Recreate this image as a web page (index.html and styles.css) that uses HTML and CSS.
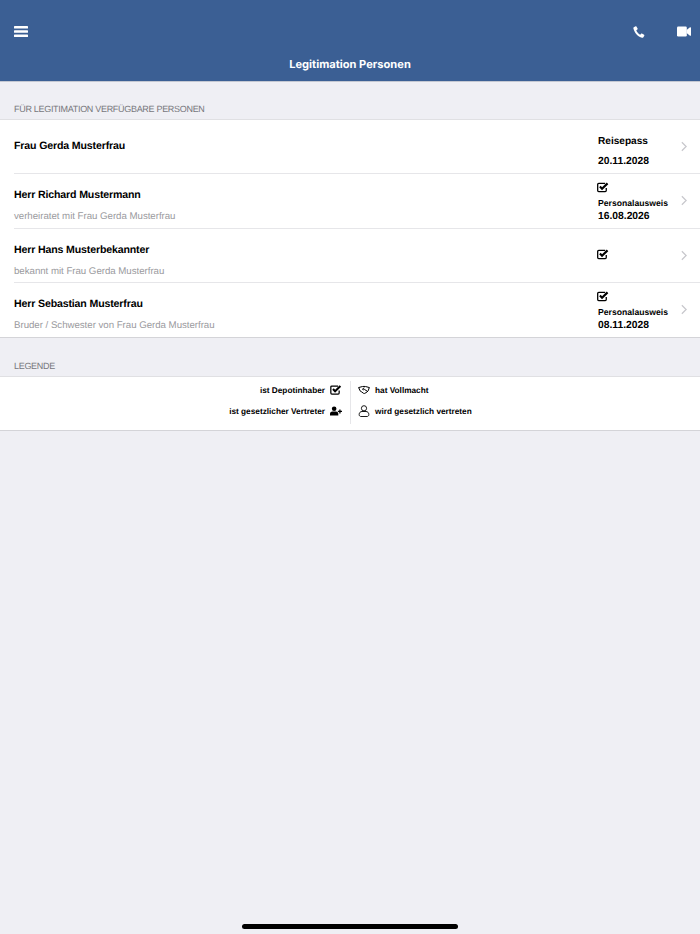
FILE: index.html
```html
<!DOCTYPE html>
<html lang="de">
<head>
    <meta charset="UTF-8">
    <meta name="viewport" content="width=device-width, initial-scale=1.0">
    <title>Legitimation Personen</title>
    <link rel="stylesheet" href="styles.css">
</head>
<body>
    <svg class="icon-defs" width="0" height="0">
        <symbol id="check" viewBox="0 0 14 12">
            <path d="M10.800 6.600v3a1.200 1.200 0 0 1-1.200 1.200H2a1.200 1.200 0 0 1-1.200-1.200V2.400A1.200 1.200 0 0 1 2 1.200h7.500" fill="none" stroke="currentColor" stroke-width="1.500"/>
            <path d="M3.400 4.800l2.500 2.600 6.400-6.200" fill="none" stroke="currentColor" stroke-width="2.500"/>
        </symbol>
        <symbol id="chevron" viewBox="0 0 7 12">
            <path d="M1 1l5 5-5 5" fill="none" stroke="currentColor" stroke-width="1.400"/>
        </symbol>
    </svg>

    <header class="topbar">
        <div class="topbar-icons">
            <svg class="menu-icon" viewBox="0 0 14 11">
                <rect width="14" height="2.600" rx="0.600" fill="#fff"/>
                <rect y="4.200" width="14" height="2.600" rx="0.600" fill="#fff"/>
                <rect y="8.400" width="14" height="2.600" rx="0.600" fill="#fff"/>
            </svg>
            <div class="topbar-right">
                <svg class="phone-icon" viewBox="0 0 12 12">
                    <path d="M2.600.3L.8 1.300C.4 1.600.3 2 .4 2.500c.6 2.200 1.600 4.200 3 5.800 1.500 1.700 3.600 3 5.600 3.500.5.100.9 0 1.200-.4l1.100-1.700c.2-.3.1-.7-.2-.9L8.900 7.600c-.3-.2-.6-.1-.8.100l-.9 1c-1.800-.9-3.200-2.600-3.900-4.500l1.100-.8c.3-.2.3-.5.200-.8L3.400.6C3.200.2 2.900.1 2.600.3z" fill="#fff"/>
                </svg>
                <svg class="video-icon" viewBox="0 0 14 11">
                    <rect y="0.500" width="9.800" height="10" rx="1.200" fill="#fff"/>
                    <path d="M9.600 4L13 1.300c.4-.3 1-.1 1 .4v7.600c0 .5-.6.700-1 .4L9.600 7z" fill="#fff"/>
                </svg>
            </div>
        </div>
        <h1 class="topbar-title">Legitimation Personen</h1>
    </header>

    <div class="section-label">FÜR LEGITIMATION VERFÜGBARE PERSONEN</div>
    <section class="list">
        <div class="person">
            <div class="person-main person-main-single">
                <div class="person-name">Frau Gerda Musterfrau</div>
            </div>
            <div class="person-doc doc-plain">
                <div class="doc-name-large">Reisepass</div>
                <div class="doc-date">20.11.2028</div>
            </div>
            <svg class="chevron"><use href="#chevron"/></svg>
        </div>
        <div class="person">
            <div class="person-main">
                <div class="person-name">Herr Richard Mustermann</div>
                <div class="person-rel">verheiratet mit Frau Gerda Musterfrau</div>
            </div>
            <div class="person-doc">
                <svg class="check"><use href="#check"/></svg>
                <div class="doc-name">Personalausweis</div>
                <div class="doc-date">16.08.2026</div>
            </div>
            <svg class="chevron"><use href="#chevron"/></svg>
        </div>
        <div class="person">
            <div class="person-main">
                <div class="person-name">Herr Hans Musterbekannter</div>
                <div class="person-rel">bekannt mit Frau Gerda Musterfrau</div>
            </div>
            <div class="person-doc doc-check-only">
                <svg class="check"><use href="#check"/></svg>
            </div>
            <svg class="chevron"><use href="#chevron"/></svg>
        </div>
        <div class="person">
            <div class="person-main">
                <div class="person-name">Herr Sebastian Musterfrau</div>
                <div class="person-rel">Bruder / Schwester von Frau Gerda Musterfrau</div>
            </div>
            <div class="person-doc">
                <svg class="check"><use href="#check"/></svg>
                <div class="doc-name">Personalausweis</div>
                <div class="doc-date">08.11.2028</div>
            </div>
            <svg class="chevron"><use href="#chevron"/></svg>
        </div>
    </section>

    <div class="section-label section-label-legend">LEGENDE</div>
    <section class="legend">
        <div class="legend-col legend-left">
            <div class="legend-item">
                <span>ist Depotinhaber</span>
                <svg class="legend-icon"><use href="#check"/></svg>
            </div>
            <div class="legend-item">
                <span>ist gesetzlicher Vertreter</span>
                <svg class="legend-icon" viewBox="0 0 13 10">
                    <circle cx="4.500" cy="2.600" r="2.500" fill="currentColor"/>
                    <path d="M0 10V8c0-1.500 1-2.500 2.500-2.500h4C8 5.500 9 6.500 9 8v2z" fill="currentColor"/>
                    <path d="M8.500 5.500h4.500M10.750 3.300v4.400" stroke="currentColor" stroke-width="1.400" fill="none"/>
                </svg>
            </div>
        </div>
        <div class="legend-col legend-right">
            <div class="legend-item">
                <svg class="legend-icon" viewBox="0 0 12 8">
                    <path d="M.3 1.700L3 .9c1-.3 2-.5 3-.5s2 .2 3 .5l2.700.8M.8 1.800l1.200 3 1.800 1.200L5.500 7.300c.5.300 1 .3 1.400 0L9 6l1.200-1.200 1-3" fill="none" stroke="currentColor" stroke-width="1"/>
                    <path d="M6.300 1.700L4.400 3.200c.5.700 1.300.7 2 .2l3.200 2" fill="none" stroke="currentColor" stroke-width="1"/>
                </svg>
                <span>hat Vollmacht</span>
            </div>
            <div class="legend-item">
                <svg class="legend-icon legend-icon-tall" viewBox="0 0 11 12">
                    <circle cx="5.500" cy="3.300" r="2.600" fill="none" stroke="currentColor" stroke-width="0.900"/>
                    <path d="M3.500 6.500h4c1.600 0 2.800 1.200 2.800 2.700v.6c0 .9-.7 1.700-1.700 1.700H2.400c-1 0-1.700-.8-1.700-1.700v-.6c0-1.500 1.200-2.700 2.800-2.700z" fill="none" stroke="currentColor" stroke-width="0.900"/>
                </svg>
                <span>wird gesetzlich vertreten</span>
            </div>
        </div>
    </section>

    <div class="home-indicator"></div>
</body>
</html>
```

FILE: styles.css
```css
html, body {
    height: 100%;
}
body {
    margin: 0;
    background-color: #efeff4;
    color: #000;
    font-family: "Liberation Sans", Arial, sans-serif;
    text-rendering: geometricPrecision;
    overflow: hidden;
    position: relative;
}
.icon-defs {
    position: absolute;
}

/* Kopfzeile */
.topbar {
    height: 82px;
    box-sizing: border-box;
    background-color: #3b5f94;
    border-bottom: 1px solid #c4c8d2;
    padding: 25px 9px 0 14px;
}
.topbar-icons {
    display: flex;
    justify-content: space-between;
    align-items: center;
    height: 13px;
}
.topbar-right {
    display: flex;
    align-items: center;
    gap: 32px;
}
.menu-icon {
    width: 14px;
    height: 11px;
}
.phone-icon {
    width: 12px;
    height: 12px;
}
.video-icon {
    width: 14px;
    height: 11px;
}
.topbar-title {
    margin: 19px -9px 0 -14px;
    text-align: center;
    color: #fff;
    font-family: "Inter", "Liberation Sans", sans-serif;
    font-size: 11.100px;
    font-weight: 700;
    line-height: 15px;
}

.section-label {
    height: 37px;
    box-sizing: border-box;
    padding: 21px 14px 0;
    font-size: 9px;
    letter-spacing: -0.300px;
    line-height: 12px;
    color: #77777c;
}
.section-label-legend {
    height: 38px;
    padding-top: 22px;
}

/* Personen */
.list {
    background-color: #fff;
    border-top: 1px solid #e0e0e3;
    border-bottom: 1px solid #d4d4d8;
}
.person {
    display: flex;
    height: 54.250px;
    box-sizing: border-box;
    margin-left: 14px;
    border-bottom: 1px solid #e6e6e9;
}
.person:last-child {
    border-bottom: none;
}
.person-main {
    flex: 1;
    padding-top: 15px;
}
.person-main-single {
    padding-top: 20px;
}
.person-name {
    font-size: 10.600px;
    letter-spacing: -0.150px;
    font-weight: bold;
    line-height: 13px;
}
.person-rel {
    margin-top: 9px;
    font-size: 9.700px;
    letter-spacing: -0.030px;
    line-height: 12px;
    color: #9a9a9e;
}
.person-doc {
    width: 83px;
    padding-top: 8px;
    font-weight: bold;
}
.doc-plain {
    padding-top: 15px;
}
.doc-check-only {
    padding-top: 20px;
}
.check {
    display: block;
    width: 12px;
    height: 11px;
    margin-left: -1px;
    color: #000;
}
.doc-name {
    margin-top: 5px;
    font-size: 8.650px;
    line-height: 11px;
}
.doc-name-large {
    font-size: 10.100px;
    line-height: 13px;
}
.doc-date {
    margin-top: 2px;
    font-size: 10.300px;
    line-height: 12px;
}
.doc-plain .doc-date {
    margin-top: 8px;
}
.chevron {
    width: 6px;
    height: 11px;
    margin: 21px 13px 0 0;
    color: #c7c7cc;
    flex-shrink: 0;
}

/* Legende */
.legend {
    display: flex;
    height: 55px;
    box-sizing: border-box;
    padding: 4px 0 6px;
    background-color: #fff;
    border-top: 1px solid #e0e0e3;
    border-bottom: 1px solid #d4d4d8;
    font-size: 8.250px;
    font-weight: bold;
}
.legend-col {
    flex: 1 1 0;
    box-sizing: border-box;
    display: flex;
    flex-direction: column;
    gap: 3px;
}
.legend-left {
    align-items: flex-end;
    padding-right: 8px;
    border-right: 1px solid #e6e6e9;
}
.legend-right {
    padding-left: 7px;
}
.legend-item {
    display: flex;
    align-items: center;
    gap: 5px;
    height: 18px;
}
.legend-icon {
    width: 12px;
    height: 10px;
}
.legend-icon-tall {
    height: 12px;
}

.home-indicator {
    position: absolute;
    left: 242px;
    bottom: 5px;
    width: 216px;
    height: 5px;
    border-radius: 3px;
    background-color: #000;
}
```
